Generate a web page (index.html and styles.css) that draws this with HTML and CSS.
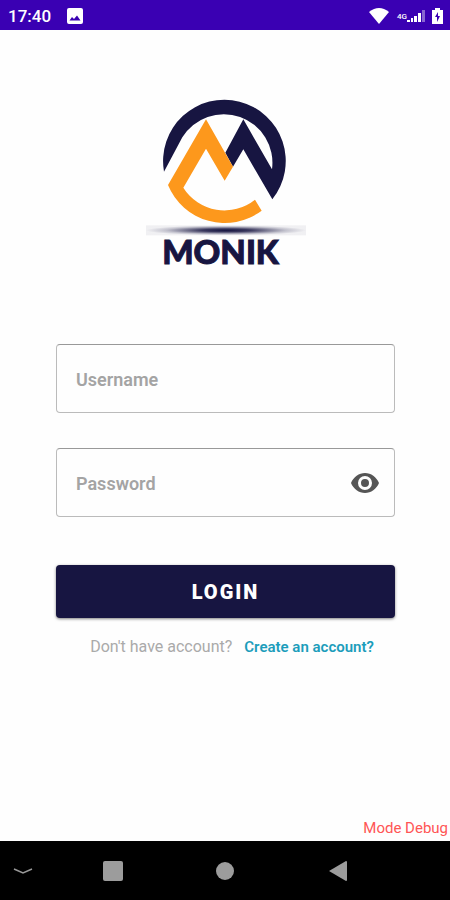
FILE: index.html
```html
<!DOCTYPE html>
<html lang="en">
<head>
  <meta charset="UTF-8">
  <meta name="viewport" content="width=device-width, initial-scale=1">
  <title>Monik - Login</title>
  <link rel="stylesheet" href="styles.css">
</head>
<body>

<header class="status-bar">
  <span class="clock">17:40</span>
  <svg class="photo-icon" width="16" height="16" viewBox="0 0 16 16">
    <path fill="#fff" fill-rule="evenodd" d="M2 0h12a2 2 0 0 1 2 2v12a2 2 0 0 1-2 2H2a2 2 0 0 1-2-2V2a2 2 0 0 1 2-2zM2.500 12.500h11L10 7.500l-3 3.500-2-2z"/>
  </svg>
  <div class="status-icons">
    <svg width="20" height="16" viewBox="0 0 20 16">
      <path fill="#fff" d="M0 4Q10-4 20 4L10 16z"/>
    </svg>
    <span class="network">4G</span>
    <svg class="signal" width="19" height="14" viewBox="0 0 19 14">
      <path fill="#fff" d="M0 11h3v2H0zM4 9h2v4H4zM7 7h3v6H7zM11 4h3v9h-3z"/>
      <path fill="#fff" opacity=".4" d="M15 1h3v12h-3z"/>
    </svg>
    <svg width="11" height="16" viewBox="0 0 11 16">
      <path fill="#fff" fill-rule="evenodd" d="M3 0h5v2h3v14H0V2h3zM6 4L3 9h2v5l3-6H6z"/>
    </svg>
  </div>
</header>

<main class="login-page">
  <div class="logo">
    <svg width="170" height="147" viewBox="0 0 510 441" aria-hidden="true">
      <defs>
        <radialGradient id="shade">
          <stop offset="0" stop-color="#171541"/>
          <stop offset=".3" stop-color="#171541" stop-opacity=".85"/>
          <stop offset=".75" stop-color="#171541" stop-opacity=".25"/>
          <stop offset="1" stop-color="#171541" stop-opacity=".06"/>
        </radialGradient>
      </defs>
      <path fill="#171541" d="M72 245A184 184 0 1 1 397 328L310 178L279 230L256 188L310 88L396 238A146 146 0 0 0 127 142Z"/>
      <path fill="#fd981c" d="M198 88L279 230L254 272L198 176L130 293A146 146 0 0 0 345 329L365 362A184 184 0 0 1 84 285Z"/>
      <rect x="18" y="406" width="480" height="30" fill="url(#shade)"/>
    </svg>
    <h1>MONIK</h1>
  </div>

  <form class="login-form" onsubmit="return false">
    <div class="field">
      <input type="text" id="username" placeholder="Username" aria-label="Username">
    </div>
    <div class="field">
      <input type="password" id="password" placeholder="Password" aria-label="Password">
      <button type="button" class="eye-btn" aria-label="Show password" onclick="togglePassword()">
        <svg width="28" height="20" viewBox="0 0 28 20">
          <path fill="#555" fill-rule="evenodd" d="M14 0C8 0 2.500 4 0 10c2.500 6 8 10 14 10s11.500-4 14-10C25.500 4 20 0 14 0zm0 3a7 7 0 1 1 0 14 7 7 0 0 1 0-14zm0 3a4 4 0 1 0 0 8 4 4 0 0 0 0-8z"/>
        </svg>
      </button>
    </div>
    <button type="submit" class="login-btn">LOGIN</button>
  </form>

  <p class="signup">
    <span>Don't have account?</span>
    <a href="#">Create an account?</a>
  </p>

  <p class="debug">Mode Debug</p>
</main>

<nav class="nav-bar">
  <button type="button" aria-label="Hide">
    <svg width="20" height="6" viewBox="0 0 20 6"><path d="M1 1l9 4 9-4" fill="none" stroke="#999" stroke-width="1.500"/></svg>
  </button>
  <button type="button" aria-label="Recent apps">
    <svg width="20" height="20" viewBox="0 0 20 20"><rect width="20" height="20" rx="2" fill="#9c9c9c"/></svg>
  </button>
  <button type="button" aria-label="Home">
    <svg width="18" height="18" viewBox="0 0 18 18"><circle cx="9" cy="9" r="9" fill="#9c9c9c"/></svg>
  </button>
  <button type="button" aria-label="Back">
    <svg width="20" height="22" viewBox="0 0 20 22"><path d="M1 11L18 1q1 0 1 1v18q0 1-1 1z" fill="#9c9c9c"/></svg>
  </button>
</nav>

<script>
  function togglePassword() {
    const input = document.getElementById('password');
    input.type = input.type === 'password' ? 'text' : 'password';
  }
</script>

</body>
</html>
```
FILE: styles.css
```css
* {
  box-sizing: border-box;
}

body {
  margin: 0;
  min-height: 100vh;
  display: flex;
  flex-direction: column;
  font-family: Roboto, sans-serif;
  background: #fefefe;
}

svg {
  display: block;
}

button {
  padding: 0;
  border: none;
  background: none;
  font-family: inherit;
  cursor: pointer;
}

/* Status bar */
.status-bar {
  display: flex;
  align-items: center;
  height: 30px;
  padding: 2px 7px 0 8px;
  background: #3a00b3;
  color: #fff;
}

.clock {
  font-size: 17px;
  font-weight: 500;
}

.photo-icon {
  margin-left: 16px;
}

.status-icons {
  display: flex;
  align-items: center;
  margin-left: auto;
}

.network {
  margin-left: 8px;
  font-size: 8px;
  font-weight: 500;
}

.signal {
  margin-right: 6px;
}

/* Login */
.login-page {
  flex: 1;
  display: flex;
  flex-direction: column;
  padding-top: 60px;
}

.logo {
  text-align: center;
}

.logo svg {
  margin: 0 auto;
}

.logo h1 {
  margin: 0 9px 0 0;
  font-family: Lato, sans-serif;
  font-size: 33px;
  font-weight: 900;
  line-height: 28px;
  color: #171541;
  -webkit-text-stroke: 1px #171541;
}

.login-form {
  margin: 79px 55px 0 56px;
}

.field {
  display: flex;
  align-items: center;
  height: 69px;
  margin-bottom: 35px;
  padding: 1px 15px 0 19px;
  border: 1px solid #bbb;
  border-top-color: #999;
  border-radius: 4px;
}

.field input {
  flex: 1;
  min-width: 0;
  padding: 0;
  border: none;
  outline: none;
  background: none;
  font-family: inherit;
  font-size: 18px;
  font-weight: 600;
  color: #333;
}

.field input::placeholder {
  color: #a4a4a4;
}

.login-btn {
  width: 100%;
  height: 53px;
  margin-top: 13px;
  border-radius: 4px;
  background: #171541;
  box-shadow: 0 1px 3px rgba(0, 0, 0, 0.5);
  font-size: 20px;
  font-weight: 900;
  letter-spacing: 2px;
  color: #fff;
}

.signup {
  display: flex;
  justify-content: center;
  align-items: center;
  gap: 12px;
  margin: 18px 0 0 14px;
  font-size: 16px;
  line-height: 22px;
  color: #aaa;
}

.signup a {
  font-size: 15px;
  font-weight: 600;
  color: #1c9dbb;
  text-decoration: none;
}

.debug {
  margin: auto 2px 4px;
  font-size: 15px;
  line-height: 18px;
  text-align: right;
  color: #f55;
}

/* Android navigation */
.nav-bar {
  display: grid;
  grid-template-columns: 10% 30% 20% 30% 10%;
  align-items: center;
  justify-items: center;
  height: 59px;
  background: #000;
}
```
